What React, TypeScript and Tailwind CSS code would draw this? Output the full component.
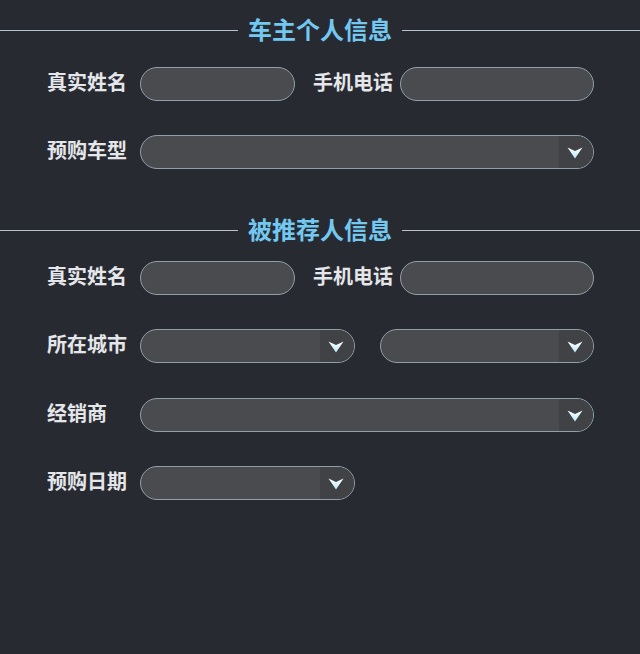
import React from 'react';

const font = { fontFamily: '"Noto Sans CJK SC", "Noto Sans", sans-serif' };

function Heading({ title }: { title: string }) {
  return (
    <div className="flex h-[40px] items-center">
      <div className="h-px flex-1 bg-[#b4c3cc]" />
      <h2 className="px-[10px] pb-[2px] text-[24px] font-bold leading-none text-[#72c8f0]">{title}</h2>
      <div className="h-px flex-1 bg-[#b4c3cc]" />
    </div>
  );
}

function Label({ text, className = '' }: { text: string; className?: string }) {
  return (
    <span className={`shrink-0 pb-[4px] text-[20px] font-bold leading-none text-[#e4e6ea] ${className}`}>{text}</span>
  );
}

function TextInput({ className = '' }: { className?: string }) {
  return (
    <input
      type="text"
      className={`h-[34px] rounded-[17px] border border-[#8fa0aa] bg-[#4a4b4f] px-3 text-[15px] text-white outline-none ${className}`}
    />
  );
}

function Arrow() {
  return (
    <svg width="16" height="12" viewBox="0 0 16 12">
      <defs>
        <linearGradient id="arr" x1="0" y1="0" x2="0" y2="1">
          <stop offset="0" stopColor="#ffffff" />
          <stop offset="1" stopColor="#b9e9f7" />
        </linearGradient>
      </defs>
      <path d="M0.5 0.5 L8 4 L15.5 0.5 L8 11.5 Z" fill="url(#arr)" />
    </svg>
  );
}

function Select({ className = '' }: { className?: string }) {
  return (
    <div
      className={`flex h-[34px] overflow-hidden rounded-[17px] border border-[#8fa0aa] bg-[#4a4b4f] ${className}`}
    >
      <div className="flex-1" />
      <div className="flex w-[34px] items-center justify-center bg-[#414246] pr-[2px] pt-[1px]">
        <Arrow />
      </div>
    </div>
  );
}

export default function App() {
  return (
    <div className="min-h-[654px] w-full bg-[#282a31]" style={font}>
      <div className="pt-[10px]">
        <Heading title="车主个人信息" />
      </div>
      <div className="pl-[47px] pr-[46px]">
        <div className="mt-[17px] flex items-center">
          <Label text="真实姓名" className="w-[93px]" />
          <TextInput className="w-[155px]" />
          <Label text="手机电话" className="ml-[18px] w-[87px]" />
          <TextInput className="min-w-0 flex-1" />
        </div>
        <div className="mt-[34px] flex items-center">
          <Label text="预购车型" className="w-[93px]" />
          <Select className="flex-1" />
        </div>
      </div>

      <div className="mt-[41px]">
        <Heading title="被推荐人信息" />
      </div>
      <div className="pl-[47px] pr-[46px]">
        <div className="mt-[11px] flex items-center">
          <Label text="真实姓名" className="w-[93px]" />
          <TextInput className="w-[155px]" />
          <Label text="手机电话" className="ml-[18px] w-[87px]" />
          <TextInput className="min-w-0 flex-1" />
        </div>
        <div className="mt-[34px] flex items-center">
          <Label text="所在城市" className="w-[93px]" />
          <Select className="w-[215px]" />
          <Select className="ml-[25px] flex-1" />
        </div>
        <div className="mt-[35px] flex items-center">
          <Label text="经销商" className="w-[93px]" />
          <Select className="flex-1" />
        </div>
        <div className="mt-[34px] flex items-center">
          <Label text="预购日期" className="w-[93px]" />
          <Select className="w-[215px]" />
        </div>
      </div>
    </div>
  );
}
